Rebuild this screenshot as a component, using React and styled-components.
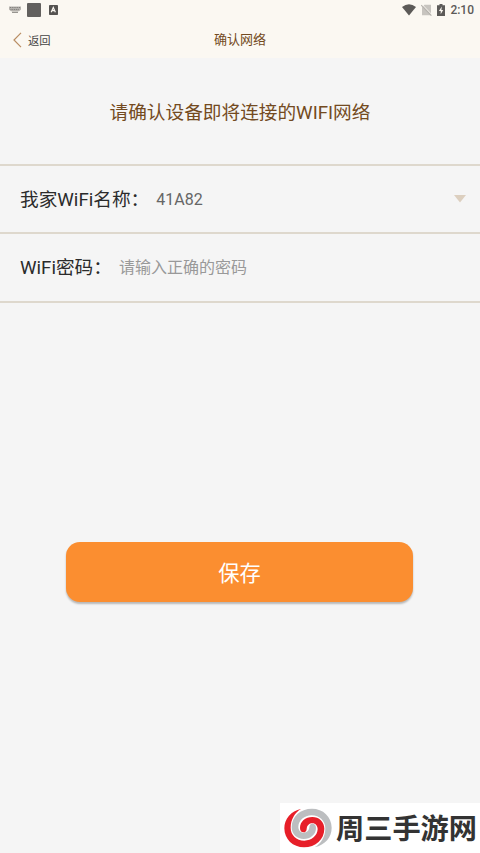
import styled, { createGlobalStyle } from 'styled-components'

function App() {
  return (
    <>
      <GlobalStyle />
      <Screen>
        <Header>
          <StatusBar>
            <StatusGroup>
              <KeyboardIcon />
              <AppSquare />
              <InputIcon />
            </StatusGroup>
            <StatusGroup>
              <WifiIcon />
              <NoSimIcon />
              <BatteryIcon />
              <Clock>2:10</Clock>
            </StatusGroup>
          </StatusBar>
          <NavBar>
            <BackButton>
              <svg width="9" height="16" viewBox="0 0 9 16">
                <path d="M8 .8 1 8l7 7.2" fill="none" stroke="#b98d63" strokeWidth="1.2" />
              </svg>
              返回
            </BackButton>
            <NavTitle>确认网络</NavTitle>
          </NavBar>
        </Header>

        <Heading>请确认设备即将连接的WIFI网络</Heading>

        <Form>
          <Row $height={68}>
            <Label>我家WiFi名称：</Label>
            <NetworkName>41A82</NetworkName>
            <Caret width="12" height="8" viewBox="0 0 12 8">
              <path d="M0 0h12L6 7.5z" fill="#dccfbf" />
            </Caret>
          </Row>
          <Row $height={69}>
            <Label>WiFi密码：</Label>
            <PasswordInput placeholder="请输入正确的密码" />
          </Row>
        </Form>

        <SaveButton>保存</SaveButton>

        <SiteMark>
          <SpiralLogo />
          <SiteName>周三手游网</SiteName>
        </SiteMark>
      </Screen>
    </>
  )
}

export default App

function KeyboardIcon() {
  return (
    <svg width="12" height="8" viewBox="0 0 12 8">
      <path d="M0 .5h12v3L10 5.2H2L0 3.5z" fill="#b5b2ad" />
      <path d="M1 1.5h10M1.5 3.5h9" stroke="#7a7875" strokeWidth=".9" strokeDasharray="1 .8" />
      <path d="M3 6.3h6" stroke="#8c8985" strokeWidth="1.2" />
    </svg>
  )
}

function InputIcon() {
  return (
    <svg width="9" height="10" viewBox="0 0 9 10">
      <rect width="9" height="10" rx=".8" fill="#555351" />
      <path d="M2.2 7.3 4.3 2.4l2.1 4.9M3 5.7h2.8" fill="none" stroke="#fbf8f2" strokeWidth="1.2" />
    </svg>
  )
}

function WifiIcon() {
  return (
    <svg width="14" height="12" viewBox="0 0 14 12">
      <path d="M0 3Q7-2.6 14 3L7 11.6z" fill="#5c5a58" />
    </svg>
  )
}

function NoSimIcon() {
  return (
    <svg width="11" height="12" viewBox="0 0 11 12">
      <path d="M3.5 .8H10v10.4H1V3.3z" fill="#c7c4bf" />
      <path d="M1.2.6l10 10.4" stroke="#fbf8f2" strokeWidth="1" />
      <path d="M.2 1.2l10.2 10.4" stroke="#b5b2ad" strokeWidth="1.1" />
    </svg>
  )
}

function BatteryIcon() {
  return (
    <svg width="8" height="12" viewBox="0 0 8 12">
      <path d="M2.5 0h3v1.2H8V12H0V1.2h2.5z" fill="#5c5a58" />
      <path d="M4.8 2.6 1.9 7h1.8v3.2L6.2 6H4.4z" fill="#fbf8f2" />
    </svg>
  )
}

// one arm of the spiral, the grey one is the same shape turned by 180deg
const spiralArm =
  'M70 22C38 30 19 52 19 81C19 114 45 138 78 138C113 138 139 114 139 82C139 61 123 47 103 47C82 47 66 61 66 80C66 88 70 93 76 93C83 93 86 88 86 82C87 72 94 66 103 66C113 66 119 74 119 84C118 103 101 118 79 118C55 118 38 101 38 79C38 54 50 34 70 22Z'

function SpiralLogo() {
  return (
    <svg width="48" height="40" viewBox="18 20 144 120">
      <path d={spiralArm} transform="rotate(180 90 80)" fill="#bcbec0" />
      <path d={spiralArm} fill="#e71f29" />
    </svg>
  )
}

const GlobalStyle = createGlobalStyle`
  * {
    box-sizing: border-box;
  }

  body {
    margin: 0;
    background: #f5f5f5;
    font-family: Roboto, "Noto Sans CJK SC", sans-serif;
  }
`

const Screen = styled.div`
  display: flex;
  flex-direction: column;
  height: 853px;
  overflow: hidden;
  background: #f5f5f5;
`

const Header = styled.header`
  height: 58px;
  background: #fbf8f2;
`

const StatusBar = styled.div`
  display: flex;
  align-items: center;
  justify-content: space-between;
  height: 19px;
  padding: 0 6px 0 9px;
`

const StatusGroup = styled.div`
  display: flex;
  align-items: center;

  svg:first-child {
    margin-right: 5px;
  }

  svg + svg {
    margin-right: 5px;
  }
`

const AppSquare = styled.span`
  width: 14px;
  height: 14px;
  margin: 0 8px 0 1px;
  border-radius: 1px;
  background: #62605e;
`

const Clock = styled.span`
  font-size: 12px;
  font-weight: 500;
  line-height: 14px;
  color: #5c5a58;
`

const NavBar = styled.div`
  display: grid;
  grid-template-columns: 1fr auto 1fr;
  align-items: center;
  height: 41px;
  padding: 0 13px;
`

const BackButton = styled.div`
  display: flex;
  align-items: center;
  gap: 6px;
  font-size: 11.3px;
  color: #444;
`

const NavTitle = styled.div`
  font-size: 13px;
  line-height: 20px;
  color: #734a21;
`

const Heading = styled.h1`
  margin: 0;
  height: 106px;
  font-size: 18.67px;
  font-weight: 400;
  line-height: 111px;
  text-align: center;
  color: #734a21;
`

const Form = styled.div`
  border-top: 2px solid #ded8cd;
`

const Row = styled.div`
  display: flex;
  align-items: center;
  height: ${({ $height }) => $height}px;
  padding: 0 14px 0 20px;
  border-bottom: 2px solid #ded8cd;
`

const Label = styled.label`
  padding-bottom: 4px;
  margin-right: 7px;
  font-size: 18.67px;
  color: #2b2b2b;
`

const NetworkName = styled.span`
  flex: 1;
  font-size: 16px;
  color: #666;
`

const PasswordInput = styled.input`
  flex: 1;
  padding: 0;
  border: none;
  outline: none;
  background: none;
  font-family: inherit;
  font-size: 16px;

  &::placeholder {
    color: #999;
  }
`

const Caret = styled.svg`
  flex: none;
`

const SaveButton = styled.button`
  height: 60px;
  margin: 239px 67px 0 66px;
  padding: 0 0 2px;
  border: none;
  border-radius: 14px;
  background: #fb8e30;
  box-shadow: 0 2px 2px rgba(0, 0, 0, 0.25);
  font-family: inherit;
  font-size: 21.3px;
  color: #fff;
`

const SiteMark = styled.div`
  display: flex;
  align-items: center;
  align-self: flex-end;
  width: 200px;
  height: 50px;
  margin-top: auto;
  padding-left: 4px;
  background: #fff;
`

const SiteName = styled.span`
  margin-left: 4px;
  padding-top: 3px;
  font-size: 28.2px;
  font-weight: 700;
  line-height: 47px;
  white-space: nowrap;
  color: #333;
`
